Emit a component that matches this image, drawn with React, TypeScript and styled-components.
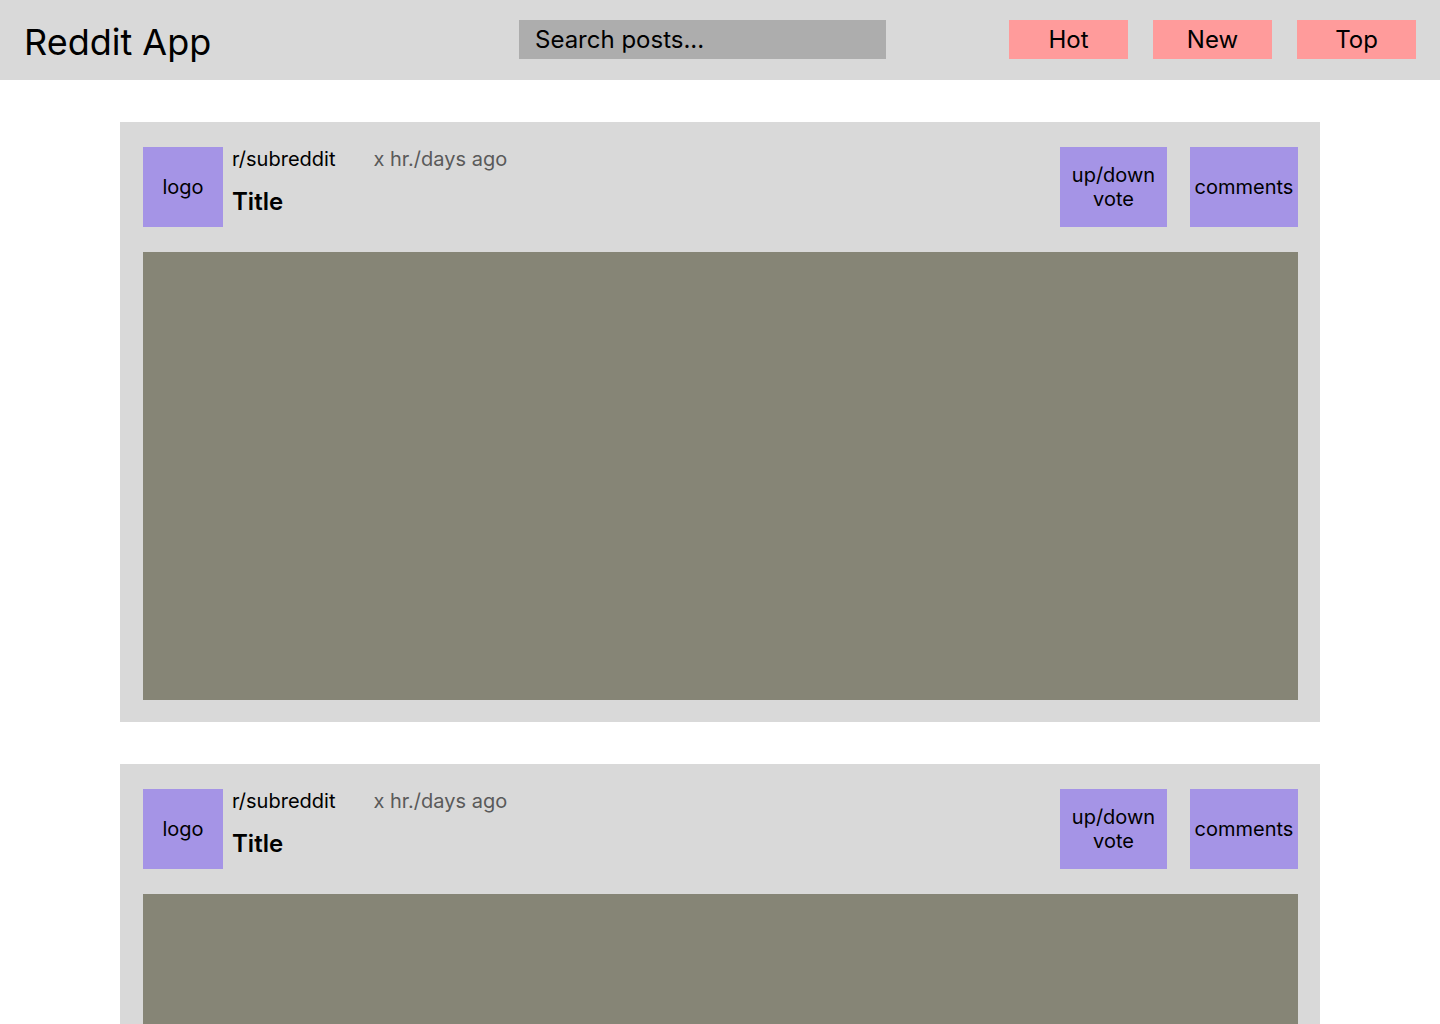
import React from "react";
import styled, { createGlobalStyle } from "styled-components";

const GlobalStyle = createGlobalStyle`
  html, body { margin: 0; padding: 0; background: #ffffff; }
  body { font-family: Inter, "Noto Sans", sans-serif; color: #000; }
  * { box-sizing: border-box; }
`;

const Header = styled.header`
  height: 80px;
  background: #d9d9d9;
  display: flex;
  align-items: flex-start;
  padding: 20px 24px 0;
`;

const AppTitle = styled.h1`
  margin: 0;
  font-size: 36px;
  font-weight: 400;
  line-height: 44px;
`;

const Search = styled.input`
  margin-left: auto;
  width: 367px;
  height: 39px;
  border: none;
  outline: none;
  background: #adadad;
  padding: 0 16px;
  font-family: Inter, sans-serif;
  font-size: 24px;
  color: #000;
  &::placeholder { color: #000; opacity: 1; }
`;

const Nav = styled.nav`
  display: flex;
  gap: 25px;
  margin-left: 123px;
`;

const SortButton = styled.button`
  width: 119px;
  height: 39px;
  border: none;
  background: #ff9b9b;
  font-family: Inter, sans-serif;
  font-size: 24px;
  color: #000;
  padding: 0;
  cursor: pointer;
`;

const Main = styled.main`
  display: flex;
  flex-direction: column;
  align-items: center;
  gap: 42px;
  padding: 42px 0 42px;
`;

const Card = styled.article`
  width: 1200px;
  background: #d9d9d9;
  padding: 25px 22px 22px 23px;
`;

const CardHead = styled.div`
  display: flex;
  align-items: flex-start;
  height: 80px;
`;

const Box = styled.div<{ $w: number }>`
  width: ${(p) => p.$w}px;
  height: 80px;
  background: #a594e6;
  display: flex;
  align-items: center;
  justify-content: center;
  text-align: center;
  font-size: 20px;
  line-height: 24px;
  flex-shrink: 0;
`;

const Meta = styled.div`
  margin-left: 9px;
  display: flex;
  flex-direction: column;
`;

const MetaRow = styled.div`
  display: flex;
  gap: 38px;
  font-size: 20px;
  line-height: 24px;
`;

const Time = styled.span`
  color: #5a5a5a;
`;

const PostTitle = styled.h2`
  margin: 16px 0 0;
  font-size: 24px;
  font-weight: 600;
  line-height: 30px;
`;

const Actions = styled.div`
  margin-left: auto;
  display: flex;
  gap: 23px;
`;

const Media = styled.div`
  margin-top: 25px;
  height: 448px;
  background: #868576;
`;

const Post = () => (
  <Card>
    <CardHead>
      <Box $w={80}>logo</Box>
      <Meta>
        <MetaRow>
          <span>r/subreddit</span>
          <Time>x hr./days ago</Time>
        </MetaRow>
        <PostTitle>Title</PostTitle>
      </Meta>
      <Actions>
        <Box $w={107}>
          up/down
          <br />
          vote
        </Box>
        <Box $w={108}>comments</Box>
      </Actions>
    </CardHead>
    <Media />
  </Card>
);

export default function App() {
  return (
    <>
      <GlobalStyle />
      <Header>
        <AppTitle>Reddit App</AppTitle>
        <Search placeholder="Search posts..." />
        <Nav>
          <SortButton>Hot</SortButton>
          <SortButton>New</SortButton>
          <SortButton>Top</SortButton>
        </Nav>
      </Header>
      <Main>
        <Post />
        <Post />
      </Main>
    </>
  );
}
